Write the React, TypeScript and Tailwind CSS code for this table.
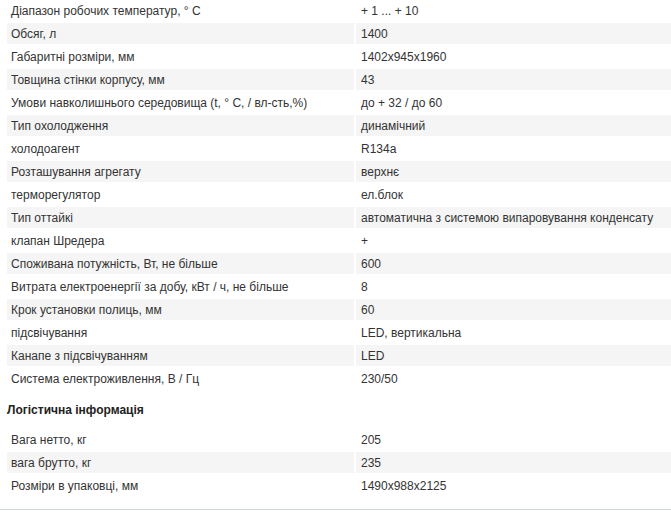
import React from 'react'

const specs: [string, string][] = [
  ['Діапазон робочих температур, ° С', '+ 1 ... + 10'],
  ['Обсяг, л', '1400'],
  ['Габаритні розміри, мм', '1402x945x1960'],
  ['Товщина стінки корпусу, мм', '43'],
  ['Умови навколишнього середовища (t, ° С, / вл-сть,%)', 'до + 32 / до 60'],
  ['Тип охолодження', 'динамічний'],
  ['холодоагент', 'R134a'],
  ['Розташування агрегату', 'верхнє'],
  ['терморегулятор', 'ел.блок'],
  ['Тип оттайкі', 'автоматична з системою випаровування конденсату'],
  ['клапан Шредера', '+'],
  ['Споживана потужність, Вт, не більше', '600'],
  ['Витрата електроенергії за добу, кВт / ч, не більше', '8'],
  ['Крок установки полиць, мм', '60'],
  ['підсвічування', 'LED, вертикальна'],
  ['Канапе з підсвічуванням', 'LED'],
  ['Система електроживлення, В / Гц', '230/50'],
]

const logistics: [string, string][] = [
  ['Вага нетто, кг', '205'],
  ['вага брутто, кг', '235'],
  ['Розміри в упаковці, мм', '1490x988x2125'],
]

const SpecTable = ({ rows }: { rows: [string, string][] }) => {
  return (
    <div className='flex flex-col gap-[2px] pl-[7px]'>
      {rows.map(([name, value], i) => (
        <div key={name} className='flex gap-[2px] h-[21px]'>
          <div className={`w-[347px] shrink-0 pl-[4px] flex items-center ${i % 2 === 1 ? 'bg-[#f5f5f5]' : ''}`}>
            {name}
          </div>
          <div className={`flex-1 pl-[5px] flex items-center ${i % 2 === 1 ? 'bg-[#f5f5f5]' : ''}`}>
            {value}
          </div>
        </div>
      ))}
    </div>
  )
}

export default function App() {
  return (
    <div className='w-[671px] h-[524px] overflow-hidden bg-white text-[#333] text-[12px] font-["Liberation_Sans",Arial,sans-serif]'>
      <SpecTable rows={specs} />
      {/* Logistics */}
      <div className='pl-[7px] pt-[14px] pb-[12px] h-[40px] font-bold text-[#222] leading-[14px]'>
        Логістична інформація
      </div>
      <SpecTable rows={logistics} />
      <div className='mt-[13px] border-t border-[#cdd6df]' />
    </div>
  )
}
